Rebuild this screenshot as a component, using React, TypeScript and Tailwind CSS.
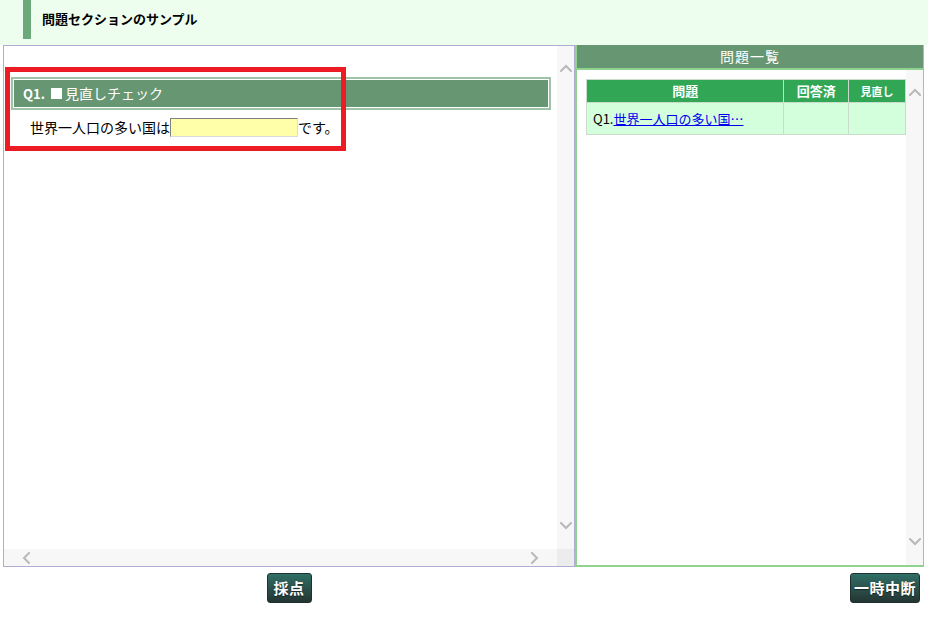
import React from "react";

function Chevron({ dir, className = "" }: { dir: "up" | "down" | "left" | "right"; className?: string }) {
  const d = {
    up: "M1 7L6 2L11 7",
    down: "M1 1L6 6L11 1",
    left: "M7 1L2 6L7 11",
    right: "M1 1L6 6L1 11",
  }[dir];
  const box = dir === "up" || dir === "down" ? "0 0 12 8" : "0 0 8 12";
  const size = dir === "up" || dir === "down" ? "h-[8px] w-[12px]" : "h-[12px] w-[8px]";
  return (
    <svg viewBox={box} fill="none" className={`${size} ${className}`} aria-hidden>
      <path d={d} stroke="#b9b9b9" strokeWidth="2" strokeLinecap="square" />
    </svg>
  );
}

function VScroll() {
  return (
    <div className="flex w-[17px] shrink-0 flex-col items-center justify-between bg-[#f7f7f7] pb-[19px] pt-[18px]">
      <Chevron dir="up" />
      <Chevron dir="down" />
    </div>
  );
}

function PanelButton({ label, className = "" }: { label: string; className?: string }) {
  return (
    <button
      type="button"
      className={`flex h-[30px] items-center justify-center rounded-[3px] border border-[#1f302e] bg-gradient-to-b from-[#2f6f66] to-[#243533] text-[15px] font-bold tracking-[0.5px] text-white [text-shadow:0_1px_1px_rgba(0,0,0,0.5)] ${className}`}
    >
      {label}
    </button>
  );
}

export default function App() {
  return (
    <div className="relative h-[617px] w-[928px] bg-white font-['Noto_Sans_CJK_JP','Noto_Sans',sans-serif] text-black">
      {/* Header */}
      <div className="flex h-[45px] bg-[#eefeee] pl-[23px]">
        <div className="h-[39px] w-[8px] bg-[#6ba97a]" />
        <h1 className="ml-[11px] mt-[9px] text-[13px] font-bold leading-[20px]">問題セクションのサンプル</h1>
      </div>

      {/* Panels */}
      <div className="flex h-[522px] pl-[3px]">
        {/* Left: question area */}
        <div className="flex w-[572px] flex-col border border-[#aeaed4]">
          <div className="flex min-h-0 flex-1">
            <div className="min-w-0 flex-1 pl-[7px] pr-[6px] pt-[31px]">
              <div className="border-2 border-[#9ec3a6]">
                <div className="flex h-[29px] items-center border border-white bg-[#679673] pl-[9px] text-white">
                  <span className="text-[13px] font-bold">Q1.</span>
                  <span className="ml-[6px] h-[11px] w-[11px] bg-white" />
                  <span className="ml-[3px] text-[14px]">見直しチェック</span>
                </div>
              </div>
              <div className="mt-[8px] flex items-center pl-[19px] text-[14px] leading-[19px]">
                <span>世界一人口の多い国は</span>
                <input
                  type="text"
                  className="h-[19px] w-[128px] border border-b-[#dcdcdc] border-l-[#808080] border-r-[#dcdcdc] border-t-[#808080] bg-[#ffffaa] outline-none"
                />
                <span>です。</span>
              </div>
            </div>
            <VScroll />
          </div>
          <div className="flex h-[17px] shrink-0">
            <div className="flex flex-1 items-center justify-between bg-[#f7f7f7] pl-[18px] pr-[18px]">
              <Chevron dir="left" />
              <Chevron dir="right" />
            </div>
            <div className="w-[17px] bg-[#ececec]" />
          </div>
        </div>

        {/* Right: question list */}
        <div className="flex w-[349px] flex-col border-b-2 border-l-2 border-r border-[#8fd38f]">
          <div className="flex h-[23px] shrink-0 items-center justify-center bg-[#679673] text-[14px] tracking-[1px] text-white">
            問題一覧
          </div>
          <div className="flex min-h-0 flex-1 border-t-2 border-[#8fd38f]">
            <div className="min-w-0 flex-1 pl-[9px] pt-[9px]">
              <table className="w-[320px] border-collapse text-[13px]">
                <thead>
                  <tr className="h-[23px] bg-[#31a755] font-bold text-white">
                    <th className="w-[198px] border border-[#c9dccb] font-bold">問題</th>
                    <th className="w-[65px] border border-[#c9dccb] font-bold">回答済</th>
                    <th className="w-[57px] border border-[#c9dccb] text-[11px] font-bold">見直し</th>
                  </tr>
                </thead>
                <tbody>
                  <tr className="h-[32px] bg-[#d4ffdc]">
                    <td className="border border-[#c9dccb] pl-[6px]">
                      Q1.<a href="#" className="text-[#0000ee] underline">世界一人口の多い国…</a>
                    </td>
                    <td className="border border-[#c9dccb]" />
                    <td className="border border-[#c9dccb]" />
                  </tr>
                </tbody>
              </table>
            </div>
            <VScroll />
          </div>
        </div>
      </div>

      {/* Buttons */}
      <div className="flex h-[50px] items-start pt-[6px]">
        <div className="flex w-[575px] justify-center pl-[3px]">
          <PanelButton label="採点" className="w-[45px]" />
        </div>
        <div className="flex flex-1 justify-end pr-[8px]">
          <PanelButton label="一時中断" className="w-[70px]" />
        </div>
      </div>

      {/* Highlight overlay */}
      <div className="pointer-events-none absolute left-[5px] top-[67px] h-[84px] w-[341px] border-[5px] border-[#ed1c24]" />
    </div>
  );
}
